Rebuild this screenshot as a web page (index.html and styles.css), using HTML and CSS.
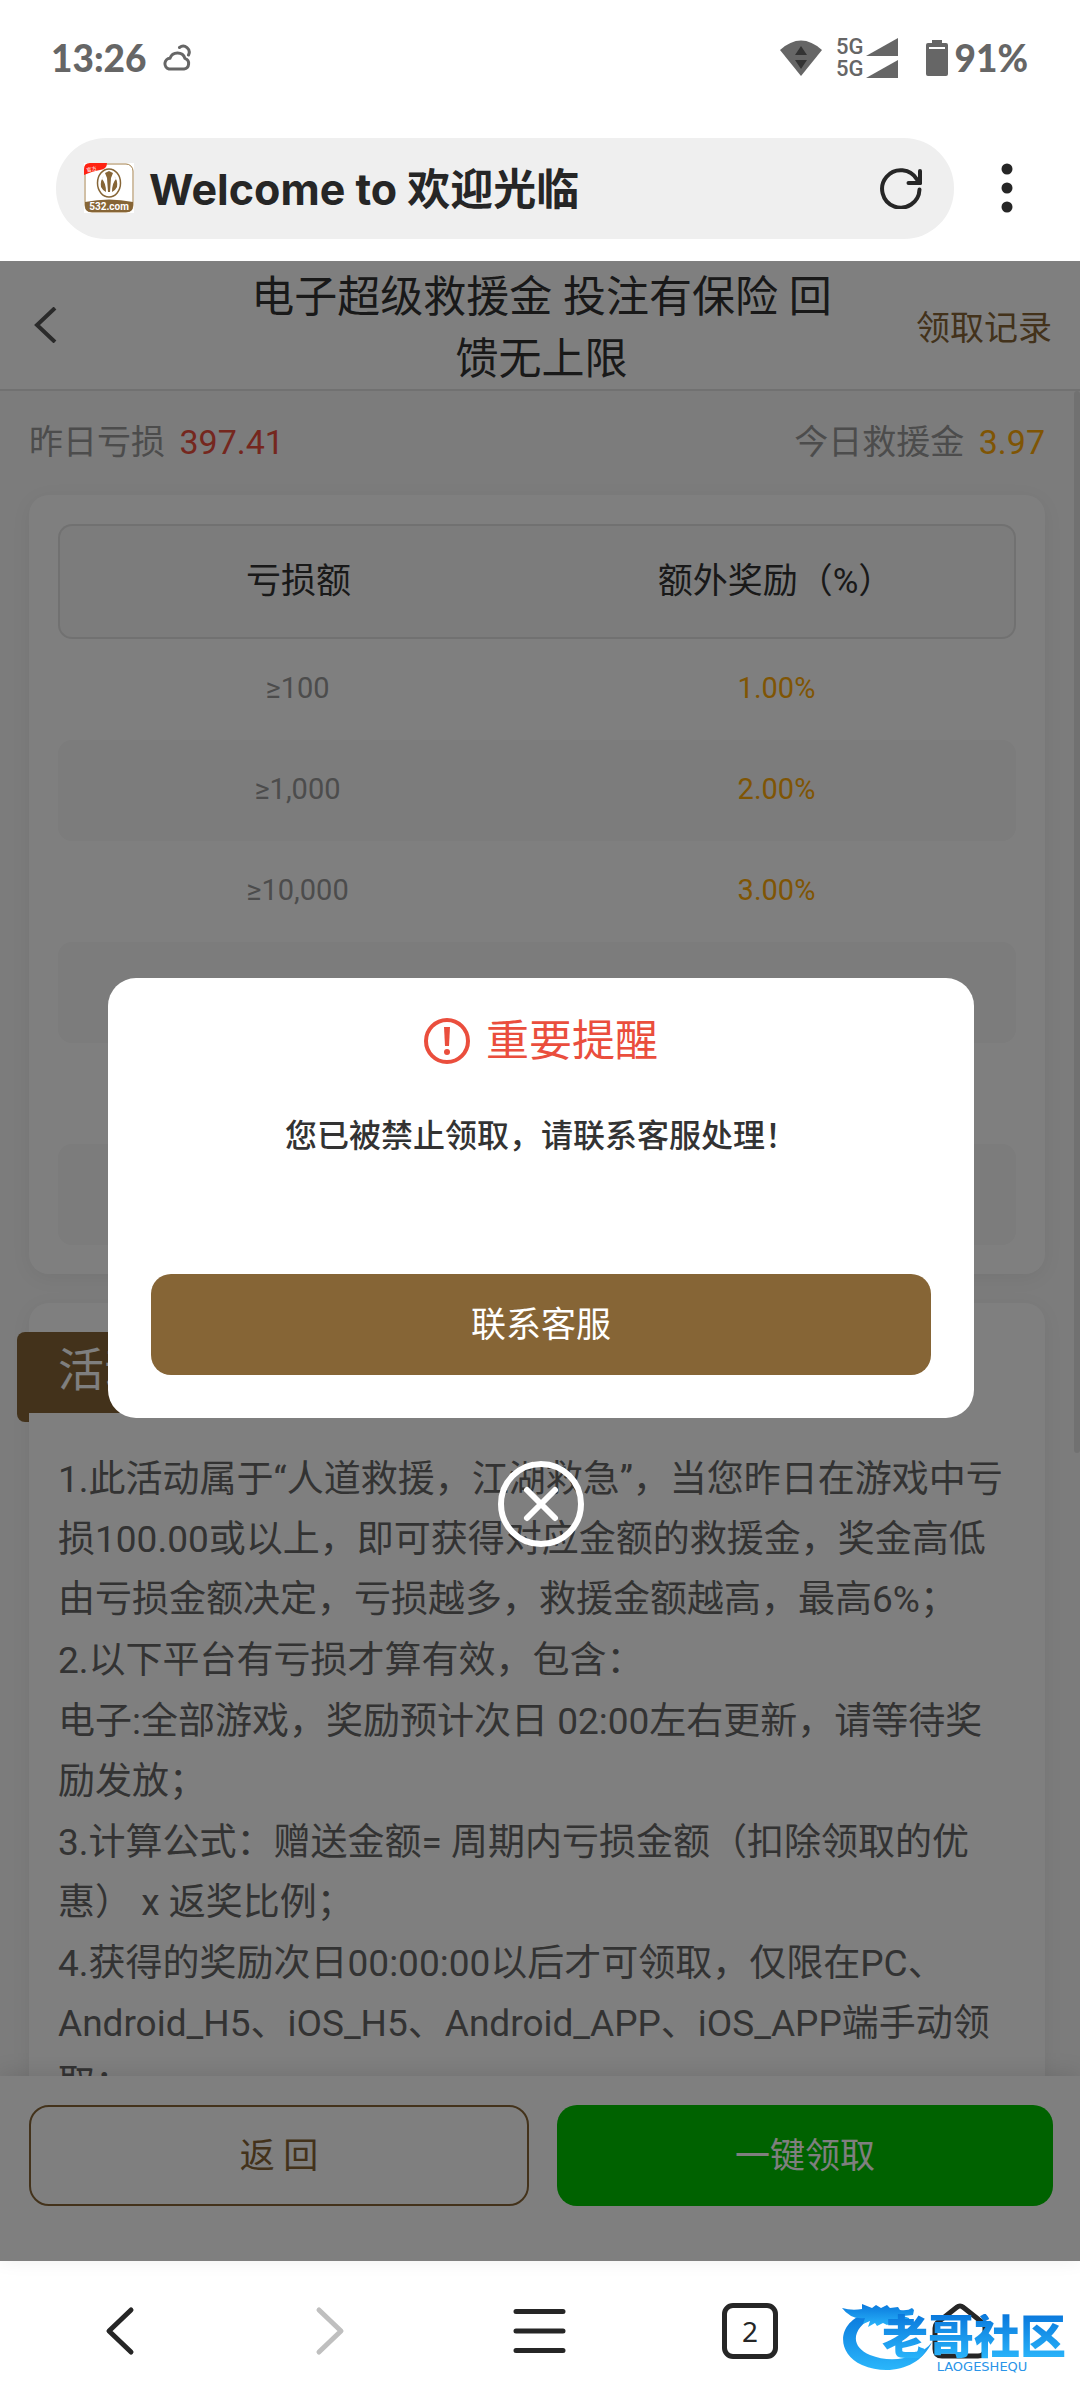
FILE: index.html
```html
<!DOCTYPE html>
<html lang="zh-CN">

<head>
  <meta charset="UTF-8">
  <meta name="viewport" content="width=device-width, initial-scale=1.0">
  <title>Welcome to 欢迎光临</title>
  <link rel="stylesheet" href="styles.css">
</head>

<body>

  <header class="status-bar">
    <div class="status-left">
      <span class="clock">13:26</span>
      <svg class="weather" width="30" height="30" viewBox="0 0 30 30" fill="none" stroke="#666" stroke-width="3" stroke-linecap="round">
        <path d="M7 26h15a5.500 5.500 0 0 0 1-10.600A8 8 0 0 0 8 15.200A5.500 5.500 0 0 0 7 26z" />
        <path d="M17.500 4.500a6 6 0 0 1 9 7.500" />
      </svg>
    </div>
    <div class="status-right">
      <svg width="42" height="36" viewBox="0 0 42 36">
        <path d="M0 10Q21-9 42 10L21 36z" fill="#666" />
        <path d="M21 6l6 9H15zM21 29l-6-9h12z" fill="#333" />
      </svg>
      <div class="signals">
        <div class="signal">5G<svg width="32" height="18" viewBox="0 0 32 18"><path d="M0 18L32 0v18z" fill="#666" /></svg></div>
        <div class="signal">5G<svg width="32" height="18" viewBox="0 0 32 18"><path d="M0 18L32 0v18z" fill="#666" /></svg></div>
      </div>
      <div class="battery">
        <svg width="22" height="36" viewBox="0 0 22 36">
          <path d="M6 0h10v3h4q2 0 2 2v29q0 2-2 2H2q-2 0-2-2V5q0-2 2-2h4z" fill="#666" />
          <path d="M3 8h16" stroke="#fff" stroke-width="2" />
        </svg>
        <span>91%</span>
      </div>
    </div>
  </header>

  <div class="address-row">
    <div class="address">
      <svg class="favicon" width="50" height="50" viewBox="0 0 50 50">
        <rect width="50" height="50" fill="#fff" />
        <rect x="1" y="1" width="48" height="48" rx="7" fill="#fff" stroke="#a3804c" />
        <path d="M1 39q24-5 48 0v4q0 6-6 6H7q-6 0-6-6z" fill="#866536" />
        <ellipse cx="25" cy="20" rx="11.500" ry="14" fill="none" stroke="#866536" stroke-width="1.500" />
        <path d="M21 10l4-2 4 2-2 5-1 14h-2l-1-14zM20 13q-4 4-3 11 2 4 5 5 0-9-4-13zM30 13q4 4 3 11-2 4-5 5 0-9 4-13z" fill="#866536" />
        <path d="M0 12V6q0-6 6-6h17q0 6-7 7T0 12z" fill="#f21" />
        <text x="3" y="9" font-size="5" fill="#fff" transform="rotate(-12 3 9)">官方</text>
        <text x="25" y="47" font-size="10" font-weight="bold" text-anchor="middle" fill="#fff">532.com</text>
      </svg>
      <span class="page-name">Welcome to 欢迎光临</span>
      <button class="icon-btn reload" aria-label="刷新">
        <svg width="42" height="42" viewBox="0 0 42 42" fill="none" stroke="#262626" stroke-width="4" stroke-linecap="round" stroke-linejoin="round">
          <path d="M39.500 22.500A18.700 18.700 0 1 1 37 12.500L40 16" />
          <path d="M40 4v12H28.500" />
        </svg>
      </button>
    </div>
    <button class="icon-btn more" aria-label="更多">
      <svg width="12" height="52" viewBox="0 0 12 52" fill="#262626">
        <circle cx="6" cy="7" r="5.500" />
        <circle cx="6" cy="26" r="5.500" />
        <circle cx="6" cy="45" r="5.500" />
      </svg>
    </button>
  </div>

  <main class="page">
    <div class="page-header">
      <button class="icon-btn back" aria-label="返回">
        <svg width="24" height="36" viewBox="0 0 24 36" fill="none" stroke="#555" stroke-width="4">
          <path d="M22 1L4 18l18 17" />
        </svg>
      </button>
      <h1>电子超级救援金 投注有保险 回馈无上限</h1>
      <a class="record" href="#">领取记录</a>
    </div>

    <div class="scroll-area">
      <div class="summary">
        <span>昨日亏损 <b class="loss">397.41</b></span>
        <span>今日救援金 <b class="bonus">3.97</b></span>
      </div>

      <section class="card">
        <table class="rates">
          <thead>
            <tr><th>亏损额</th><th>额外奖励（%）</th></tr>
          </thead>
          <tbody>
            <tr><td>≥100</td><td>1.00%</td></tr>
            <tr><td>≥1,000</td><td>2.00%</td></tr>
            <tr><td>≥10,000</td><td>3.00%</td></tr>
            <tr><td></td><td></td></tr>
            <tr><td></td><td></td></tr>
            <tr><td></td><td></td></tr>
          </tbody>
        </table>
      </section>

      <section class="card rules">
        <h2 class="ribbon">活动</h2>
        <div class="rules-text">
          <p>1.此活动属于“人道救援，江湖救急”，当您昨日在游戏中亏损100.00或以上，即可获得对应金额的救援金，奖金高低由亏损金额决定，亏损越多，救援金额越高，最高6%；</p>
          <p>2.以下平台有亏损才算有效，包含：</p>
          <p>电子:全部游戏，奖励预计次日 02:00左右更新，请等待奖励发放；</p>
          <p>3.计算公式：赠送金额= 周期内亏损金额（扣除领取的优惠） x 返奖比例；</p>
          <p>4.获得的奖励次日00:00:00以后才可领取，仅限在PC、Android_H5、iOS_H5、Android_APP、iOS_APP端手动领取；</p>
        </div>
      </section>
      <div class="scroll-thumb"></div>
    </div>

    <div class="actions">
      <button class="btn btn-outline">返 回</button>
      <button class="btn btn-green">一键领取</button>
    </div>

    <div class="overlay">
      <div class="modal" role="dialog" aria-labelledby="modal-title">
        <div class="modal-title">
          <svg width="46" height="46" viewBox="0 0 46 46" fill="none" stroke="#ea4e3d">
            <circle cx="23" cy="23" r="21" stroke-width="4" />
            <path d="M20 9h6l-1 19h-4z" fill="#ea4e3d" stroke="none" />
            <circle cx="23" cy="34" r="3" fill="#ea4e3d" stroke="none" />
          </svg>
          <span id="modal-title">重要提醒</span>
        </div>
        <p class="modal-text">您已被禁止领取，请联系客服处理！</p>
        <button class="btn btn-brown">联系客服</button>
      </div>
      <button class="icon-btn close" aria-label="关闭">
        <svg width="86" height="86" viewBox="0 0 86 86" fill="none" stroke="#fff" stroke-width="6" stroke-linecap="round">
          <circle cx="43" cy="43" r="40" />
          <path d="M29 29l28 28M57 29L29 57" />
        </svg>
      </button>
    </div>
  </main>

  <nav class="toolbar">
    <button class="icon-btn" aria-label="后退">
      <svg width="56" height="56" viewBox="0 0 56 56" fill="none" stroke="#262626" stroke-width="5" stroke-linecap="round" stroke-linejoin="round"><path d="M39 7L17 28l22 21" /></svg>
    </button>
    <button class="icon-btn" aria-label="前进" disabled>
      <svg width="56" height="56" viewBox="0 0 56 56" fill="none" stroke="#bfbfbf" stroke-width="5" stroke-linecap="round" stroke-linejoin="round"><path d="M17 7l22 21-22 21" /></svg>
    </button>
    <button class="icon-btn" aria-label="菜单">
      <svg width="56" height="56" viewBox="0 0 56 56" fill="none" stroke="#262626" stroke-width="5" stroke-linecap="round"><path d="M4 8.500h47M4 28h47M4 47.500h47" /></svg>
    </button>
    <button class="icon-btn" aria-label="标签页">
      <span class="tabs">2</span>
    </button>
    <button class="icon-btn" aria-label="主页">
      <svg width="56" height="56" viewBox="0 0 56 56" fill="none" stroke="#262626" stroke-width="5" stroke-linejoin="round"><path d="M24.500 4.500L5 20q-2 2-2 5v21q0 7 7 7h36q7 0 7-7V25q0-3-2-5L31.500 4.500q-3.500-3-7 0z" /></svg>
    </button>
  </nav>

  <div class="watermark">
    <svg width="94" height="78" viewBox="0 0 94 78">
      <defs>
        <linearGradient id="swirl" x1="0" y1="0" x2="0" y2="1">
          <stop offset="0" stop-color="#0a78dc" />
          <stop offset="1" stop-color="#2ab6fb" />
        </linearGradient>
      </defs>
      <path d="M26 17C-4 24-8 56 20 69c26 11 58 4 70-23-12 16-40 22-62 13C9 51 8 34 32 20z" fill="url(#swirl)" />
      <path d="M0 12q10 3 20 1l0-5 10 4 4-3 5 3 6-3 3 3 8-1 2 3q8 1 12-2l2 2-1 5-10 1 6 2 2 6-9-3-5 3-6-1-4 2-4-2-6 3-2-3-7 4 2-6-7 3 2-6q-14 2-23-10z" fill="url(#swirl)" />
    </svg>
    <div class="watermark-text">
      <strong>老哥社区</strong>
      <small>LAOGESHEQU</small>
    </div>
  </div>

</body>

</html>
```
FILE: styles.css
```css
* {
  box-sizing: border-box;
}

body {
  margin: 0;
  height: 100vh;
  display: flex;
  flex-direction: column;
  position: relative;
  overflow: hidden;
  background-color: #fff;
  font-family: Roboto, "Noto Sans CJK SC", sans-serif;
  color: #333;
}

button {
  font-family: inherit;
  cursor: pointer;
}

svg {
  display: block;
  flex: none;
}

.icon-btn {
  display: flex;
  align-items: center;
  justify-content: center;
  padding: 0;
  border: none;
  background: none;
}

/* phone status bar */
.status-bar {
  display: flex;
  justify-content: space-between;
  height: 115px;
  padding: 0 52px 0 51px;
  font-family: Lato, "Noto Sans CJK SC", sans-serif;
  font-size: 37px;
  font-weight: 900;
  color: #666;
}

.status-left,
.status-right,
.battery,
.signal {
  display: flex;
  align-items: center;
}

.status-left {
  gap: 15px;
}

.status-right {
  gap: 14px;
}

.signals {
  display: flex;
  flex-direction: column;
  gap: 4px;
  margin-right: 14px;
}

.signal {
  gap: 3px;
  font-family: Roboto, sans-serif;
  font-size: 22px;
  font-weight: 500;
  line-height: 18px;
}

.battery {
  gap: 6px;
}

/* browser address bar */
.address-row {
  display: flex;
  align-items: center;
  height: 146px;
  padding: 0 56px;
}

.address {
  flex: 1;
  display: flex;
  align-items: center;
  height: 101px;
  padding: 0 32px 0 28px;
  border-radius: 50px;
  background-color: #efefef;
}

.page-name {
  flex: 1;
  margin-left: 15px;
  padding-bottom: 4px;
  font-family: Inter, "Noto Sans CJK SC", sans-serif;
  font-size: 43px;
  font-weight: 700;
  color: #262626;
}

.more {
  width: 12px;
  margin-left: 47px;
  margin-right: 11px;
}

/* activity page */
.page {
  flex: 1;
  min-height: 0;
  display: flex;
  flex-direction: column;
  position: relative;
  background-color: #f8f8f8;
}

.page-header {
  display: flex;
  align-items: center;
  justify-content: space-between;
  height: 130px;
  padding: 0 28px 0 33px;
  border-bottom: 2px solid #e3e3e3;
  background-color: #fff;
}

.page-header h1 {
  width: 600px;
  margin: 0 0 0 110px;
  padding-top: 5px;
  font-size: 43px;
  font-weight: 400;
  line-height: 62px;
  text-align: center;
}

.record {
  font-size: 34px;
  color: #866536;
  text-decoration: none;
}

.scroll-area {
  flex: 1;
  min-height: 0;
  position: relative;
  overflow: hidden;
  padding: 0 35px 0 29px;
}

.scroll-thumb {
  position: absolute;
  top: 0;
  right: 0;
  width: 6px;
  height: 63%;
  border-radius: 6px;
  background-color: #e3e3e3;
}

.summary {
  display: flex;
  align-items: center;
  justify-content: space-between;
  height: 104px;
  padding-bottom: 8px;
  font-size: 34px;
  color: #999;
}

.summary b {
  margin-left: 6px;
  font-weight: 400;
}

.loss {
  color: #ea4e3d;
}

.bonus {
  color: #ffaa09;
}

.card {
  margin-bottom: 29px;
  padding: 29px;
  border-radius: 20px;
  background-color: #fff;
  box-shadow: 0 4px 20px rgba(0, 0, 0, 0.06);
}

.rates {
  width: 100%;
  table-layout: fixed;
  border-spacing: 0;
  text-align: center;
}

.rates th {
  height: 115px;
  padding: 0 0 8px;
  border: 2px solid #e3e3e3;
  background-color: #f8f8f8;
  font-size: 35px;
  font-weight: 400;
}

.rates th:first-child {
  border-right: none;
}

.rates th:last-child {
  border-left: none;
}

.rates td {
  height: 101px;
  padding: 0 0 3px;
  font-size: 29px;
  color: #999;
}

.rates td:last-child {
  color: #ffaa09;
}

.rates tbody tr:nth-child(even) td {
  background-color: #f8f8f8;
}

.rates th:first-child,
.rates td:first-child {
  border-radius: 14px 0 0 14px;
}

.rates th:last-child,
.rates td:last-child {
  border-radius: 0 14px 14px 0;
}

.ribbon {
  width: 260px;
  height: 81px;
  margin: 0 0 0 -41px;
  padding-left: 41px;
  position: relative;
  border-radius: 8px 8px 8px 0;
  background-color: #866536;
  color: #fff;
  font-size: 46px;
  font-weight: 400;
  line-height: 76px;
}

/* the fold that hangs beside the card */
.ribbon::after {
  content: "";
  position: absolute;
  top: 100%;
  left: 0;
  width: 12px;
  height: 9px;
  border-radius: 0 0 0 8px;
  background-color: #866536;
}

.rules-text {
  display: flex;
  flex-direction: column;
  gap: 1px;
  margin-top: 37px;
  font-size: 37px;
  line-height: 60px;
  color: #666;
}

.rules-text p {
  margin: 0;
}

.actions {
  display: flex;
  gap: 28px;
  height: 185px;
  padding: 29px 27px 0 29px;
  position: relative;
  background-color: #fff;
  box-shadow: 0 -4px 20px rgba(0, 0, 0, 0.1);
}

.btn {
  flex: 1;
  height: 101px;
  padding: 0 0 6px;
  border: none;
  border-radius: 20px;
  font-size: 35px;
  color: #fff;
}

.btn-outline {
  border: 2px solid #866536;
  background-color: #fff;
  color: #866536;
}

.btn-green {
  background-color: #00c400;
}

.btn-brown {
  flex: none;
  width: 100%;
  background-color: #866536;
}

/* notice */
.overlay {
  position: absolute;
  inset: 0;
  display: flex;
  flex-direction: column;
  align-items: center;
  justify-content: center;
  gap: 43px;
  padding: 2px 0 0 2px;
  background-color: rgba(0, 0, 0, 0.5);
}

.modal {
  display: flex;
  flex-direction: column;
  justify-content: space-between;
  width: 866px;
  max-width: 90%;
  min-height: 440px;
  padding: 32px 43px 43px;
  border-radius: 28px;
  background-color: #fff;
}

.modal-title {
  display: flex;
  align-items: center;
  justify-content: center;
  gap: 16px;
  font-size: 43px;
  line-height: 62px;
  color: #ea4e3d;
}

.modal-text {
  flex: 1;
  margin: 40px 0 0;
  font-size: 32px;
  font-weight: 500;
  line-height: 48px;
  text-align: center;
}

/* browser toolbar */
.toolbar {
  display: flex;
  height: 139px;
  padding: 0 15px;
}

.toolbar .icon-btn {
  flex: 1;
}

.tabs {
  width: 56px;
  height: 56px;
  border: 5px solid #262626;
  border-radius: 11px;
  font-family: "Noto Sans", sans-serif;
  font-size: 28px;
  line-height: 46px;
  color: #262626;
}

.watermark {
  position: absolute;
  right: 14px;
  bottom: 26px;
  display: flex;
  align-items: flex-end;
  pointer-events: none;
}

.watermark-text {
  display: flex;
  flex-direction: column;
  align-items: center;
  margin-left: -54px;
  font-family: "DejaVu Sans", "Noto Sans CJK SC", sans-serif;
  color: #2a94e8;
}

.watermark strong {
  font-size: 46px;
  font-weight: 900;
  line-height: 46px;
  color: transparent;
  background-image: linear-gradient(#0a78dc, #2ab6fb);
  background-clip: text;
}

.watermark small {
  margin-left: 16px;
  font-size: 13px;
  line-height: 14px;
}
```
